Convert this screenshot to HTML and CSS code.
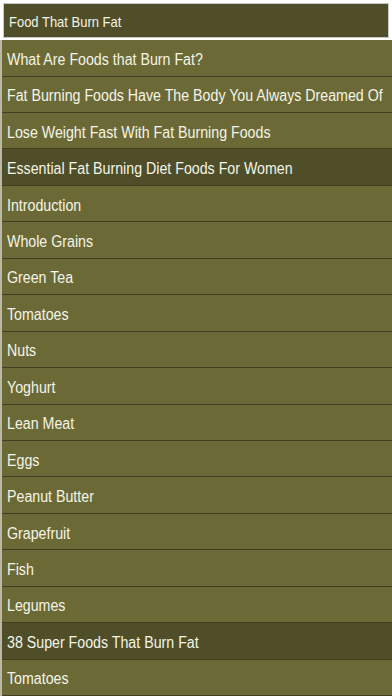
FILE: index.html
```html
<!DOCTYPE html>
<html>
<head>
<meta charset="utf-8">
<link rel="stylesheet" href="styles.css">
</head>
<body>
<div class="page">
  <header class="title-bar"><span class="title">Food That Burn Fat</span></header>
  <ul class="list">
    <li class="row"><span class="label">What Are Foods that Burn Fat?</span></li>
    <li class="row"><span class="label">Fat Burning Foods Have The Body You Always Dreamed Of</span></li>
    <li class="row"><span class="label">Lose Weight Fast With Fat Burning Foods</span></li>
    <li class="row section"><span class="label">Essential Fat Burning Diet Foods For Women</span></li>
    <li class="row"><span class="label">Introduction</span></li>
    <li class="row"><span class="label">Whole Grains</span></li>
    <li class="row"><span class="label">Green Tea</span></li>
    <li class="row"><span class="label">Tomatoes</span></li>
    <li class="row"><span class="label">Nuts</span></li>
    <li class="row"><span class="label">Yoghurt</span></li>
    <li class="row"><span class="label">Lean Meat</span></li>
    <li class="row"><span class="label">Eggs</span></li>
    <li class="row"><span class="label">Peanut Butter</span></li>
    <li class="row"><span class="label">Grapefruit</span></li>
    <li class="row"><span class="label">Fish</span></li>
    <li class="row"><span class="label">Legumes</span></li>
    <li class="row section"><span class="label">38 Super Foods That Burn Fat</span></li>
    <li class="row"><span class="label">Tomatoes</span></li>
  </ul>
</div>
</body>
</html>
```
FILE: styles.css
```css
html, body {
  margin: 0;
  padding: 0;
  background: #ffffff;
  overflow: hidden;
}
.page {
  width: 392px;
  height: 696px;
  display: flex;
  flex-direction: column;
  font-family: "Liberation Sans", Arial, sans-serif;
}
.title-bar {
  margin: 3px 3px 0 3px;
  height: 33px;
  background: #4f4e28;
  border: 1px solid #c8c8c8;
  display: flex;
  align-items: center;
  padding-left: 5px;
  padding-top: 2px;
  box-sizing: content-box;
}
.title {
  display: inline-block;
  color: #f2f2e6;
  font-size: 14.5px;
  white-space: nowrap;
  transform: scaleX(0.895);
  transform-origin: left center;
}
.list {
  list-style: none;
  margin: 2px 0 0 0;
  padding: 0;
  border-left: 2px solid #b9b9a4;
  background: #6b6a36;
}
.row {
  box-sizing: border-box;
  height: 36.45px;
  display: flex;
  align-items: center;
  padding-left: 5px;
  padding-top: 4px;
  color: #f4f4e8;
  white-space: nowrap;
  border-bottom: 1px solid #3f3e1f;
  background: #6b6a36;
}
.row.section {
  background: #4f4e28;
}
.label {
  display: inline-block;
  font-size: 16px;
  transform: scaleX(0.888);
  transform-origin: left center;
}
```
